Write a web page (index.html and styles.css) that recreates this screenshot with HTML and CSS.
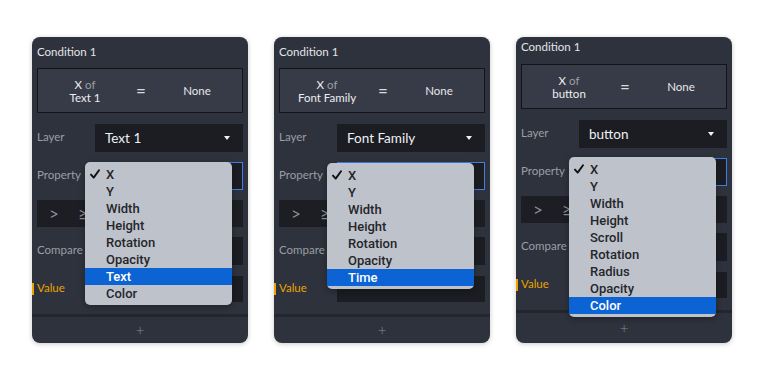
FILE: index.html
```html
<!DOCTYPE html>
<html>
<head>
<meta charset="utf-8">
<link rel="stylesheet" href="styles.css">
</head>
<body>
<div class="stage">

  <div class="panel">
    <div class="head">Condition 1</div>
    <div class="summary">
      <div class="sum-col"><span class="w">X</span> <span class="g">of</span><br><span class="w">Text 1</span></div>
      <div class="sum-col eq">=</div>
      <div class="sum-col">None</div>
    </div>
    <div class="rows">
      <div class="row"><span class="label">Layer</span><div class="select">Text 1<span class="caret"></span></div></div>
      <div class="row"><span class="label">Property</span><div class="select focus"></div></div>
      <div class="ops"><span>&gt;</span><span>&ge;</span></div>
      <div class="row"><span class="label">Compare</span><div class="select"></div></div>
      <div class="row"><span class="label value">Value</span><div class="select short"></div></div>
    </div>
    <div class="foot">+</div>
    <div class="menu m1">
      <div class="item checked"><svg class="check" viewBox="0 0 10 10"><path d="M1 5.6 L3.7 8.6 L9 1.2" fill="none" stroke="#111" stroke-width="1.9" stroke-linecap="round" stroke-linejoin="round"/></svg>X</div>
      <div class="item">Y</div>
      <div class="item">Width</div>
      <div class="item">Height</div>
      <div class="item">Rotation</div>
      <div class="item">Opacity</div>
      <div class="item active">Text</div>
      <div class="item">Color</div>
    </div>
  </div>

  <div class="panel">
    <div class="head">Condition 1</div>
    <div class="summary">
      <div class="sum-col"><span class="w">X</span> <span class="g">of</span><br><span class="w">Font Family</span></div>
      <div class="sum-col eq">=</div>
      <div class="sum-col">None</div>
    </div>
    <div class="rows">
      <div class="row"><span class="label">Layer</span><div class="select">Font Family<span class="caret"></span></div></div>
      <div class="row"><span class="label">Property</span><div class="select focus"></div></div>
      <div class="ops"><span>&gt;</span><span>&ge;</span></div>
      <div class="row"><span class="label">Compare</span><div class="select"></div></div>
      <div class="row"><span class="label value">Value</span><div class="select short"></div></div>
    </div>
    <div class="foot">+</div>
    <div class="menu m2">
      <div class="item checked"><svg class="check" viewBox="0 0 10 10"><path d="M1 5.6 L3.7 8.6 L9 1.2" fill="none" stroke="#111" stroke-width="1.9" stroke-linecap="round" stroke-linejoin="round"/></svg>X</div>
      <div class="item">Y</div>
      <div class="item">Width</div>
      <div class="item">Height</div>
      <div class="item">Rotation</div>
      <div class="item">Opacity</div>
      <div class="item active">Time</div>
    </div>
  </div>

  <div class="panel compact">
    <div class="head">Condition 1</div>
    <div class="summary">
      <div class="sum-col"><span class="w">X</span> <span class="g">of</span><br><span class="w">button</span></div>
      <div class="sum-col eq">=</div>
      <div class="sum-col">None</div>
    </div>
    <div class="rows">
      <div class="row"><span class="label">Layer</span><div class="select">button<span class="caret"></span></div></div>
      <div class="row"><span class="label">Property</span><div class="select focus"></div></div>
      <div class="ops"><span>&gt;</span><span>&ge;</span></div>
      <div class="row"><span class="label">Compare</span><div class="select"></div></div>
      <div class="row"><span class="label value">Value</span><div class="select short"></div></div>
    </div>
    <div class="foot">+</div>
    <div class="menu m3">
      <div class="item checked"><svg class="check" viewBox="0 0 10 10"><path d="M1 5.6 L3.7 8.6 L9 1.2" fill="none" stroke="#111" stroke-width="1.9" stroke-linecap="round" stroke-linejoin="round"/></svg>X</div>
      <div class="item">Y</div>
      <div class="item">Width</div>
      <div class="item">Height</div>
      <div class="item">Scroll</div>
      <div class="item">Rotation</div>
      <div class="item">Radius</div>
      <div class="item">Opacity</div>
      <div class="item active">Color</div>
    </div>
  </div>

</div>
</body>
</html>
```

FILE: styles.css
```css
* { box-sizing: border-box; }
html, body { margin: 0; padding: 0; background: #ffffff; }
body { width: 763px; height: 381px; overflow: hidden; font-family: Lato, "Open Sans", sans-serif; }

.stage {
  display: flex;
  gap: 26px;
  padding: 37px 0 0 32px;
}

.panel {
  position: relative;
  width: 216px;
  height: 306px;
  background: #2e323c;
  border-radius: 8px;
  box-shadow: 0 1px 5px rgba(0,0,0,0.22);
  display: flex;
  flex-direction: column;
  color: #e6e7ea;
}

.head {
  height: 31px;
  padding: 7px 5px 0;
  line-height: 16px;
  font-size: 11.5px;
  color: #e4e5e8;
  white-space: nowrap;
}
.compact .head { height: 27px; padding-top: 2px; }

.summary {
  margin: 0 5px;
  height: 45px;
  background: #373b47;
  border: 1px solid #121419;
  display: grid;
  grid-template-columns: 56px 56px 56px;
  padding: 0 19px;
  align-items: center;
  justify-items: center;
  font-size: 11.5px;
  line-height: 13px;
  text-align: center;
  white-space: nowrap;
}
.sum-col .g { color: #9a9ea8; }
.sum-col .w { color: #eceef1; }
.eq { font-size: 17px; color: #d8dade; }

.rows {
  display: flex;
  flex-direction: column;
  gap: 10px;
  padding: 11px 5px 0;
  margin-bottom: 11px;
}
.row {
  display: flex;
  align-items: center;
  height: 28px;
}
.label {
  width: 58px;
  flex: none;
  font-size: 11.5px;
  color: #9a9ea6;
  position: relative;
  top: -2px;
  white-space: nowrap;
}
.label.value { color: #e9a400; }
.label.value::before {
  content: "";
  position: absolute;
  left: -5px;
  top: 2px;
  width: 2px;
  height: 12px;
  background: #e9a400;
}
.select {
  flex: 1;
  height: 28px;
  background: #1b1d22;
  display: flex;
  align-items: center;
  padding: 0 13px 0 10px;
  font-size: 13.5px;
  color: #eef0f2;
  justify-content: space-between;
  white-space: nowrap;
}
.select.focus { border: 1px solid #3c7fe6; }
.select.short { height: 26px; }
.caret {
  width: 0; height: 0;
  border-left: 3.5px solid transparent;
  border-right: 3.5px solid transparent;
  border-top: 4px solid #f2f2f2;
}

.ops {
  height: 27px;
  background: #1c1e23;
  display: flex;
  align-items: center;
  gap: 19px;
  padding-left: 12px;
  font-size: 17px;
  font-weight: 400;
  color: #8c9098;
}

.foot {
  flex: 1;
  border-top: 3px solid #23262d;
  display: flex;
  align-items: center;
  justify-content: center;
  color: #878b94;
  font-size: 15px;
  font-weight: 300;
  border-radius: 0 0 8px 8px;
}

.menu {
  position: absolute;
  left: 53px;
  width: 147px;
  background: #bec2cb;
  border-radius: 5px;
  box-shadow: 0 2px 6px rgba(0,0,0,0.3);
  padding: 4px 0 3px;
  font-family: Roboto, "Liberation Sans", sans-serif;
  font-weight: 500;
  font-size: 13px;
  color: #25262a;
}
.m1 { top: 125px; }
.m2 { top: 126px; }
.m3 { top: 120px; }
.item {
  position: relative;
  height: 17px;
  line-height: 17px;
  padding-left: 21px;
}
.item.active { background: #0b63d4; color: #ffffff; }
.check {
  position: absolute;
  left: 5px;
  top: 3px;
  width: 10px;
  height: 10px;
}
```
